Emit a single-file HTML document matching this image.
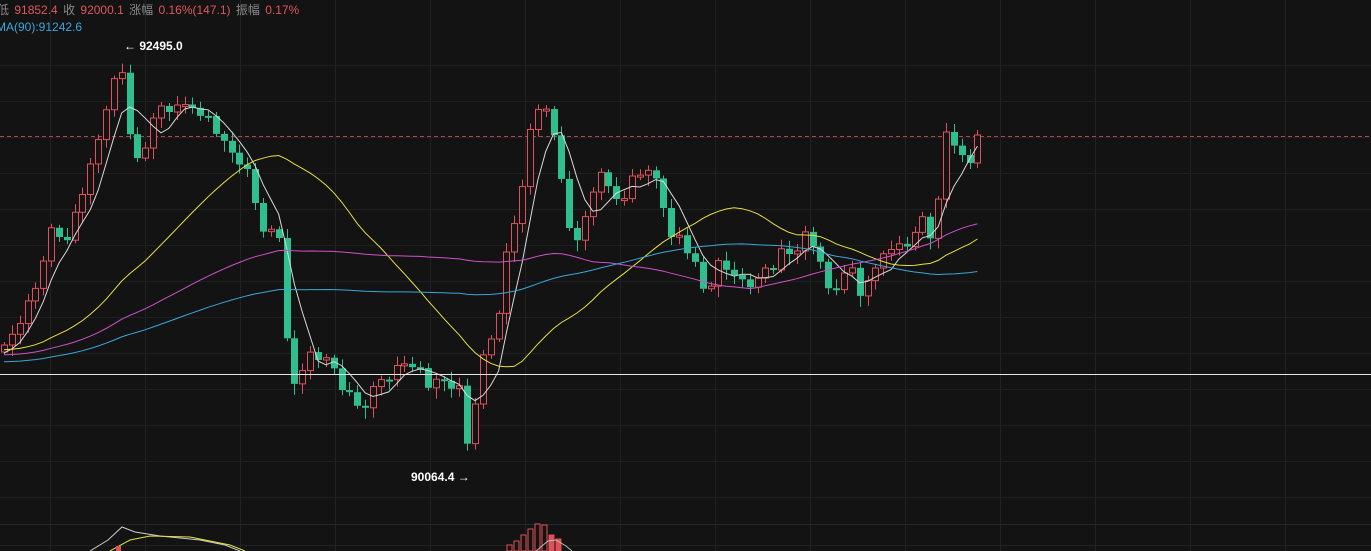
<!DOCTYPE html>
<html><head><meta charset="utf-8"><style>
html,body{margin:0;padding:0;background:#131314;width:1371px;height:551px;overflow:hidden;font-family:"Liberation Sans","Noto Sans CJK SC",sans-serif}
#t1{position:absolute;left:-3px;top:1px;font-size:12px;color:#8a8a8a;white-space:nowrap;word-spacing:2px}
#t1 b{font-weight:normal;color:#e0555a}
#t2{position:absolute;left:-4px;top:20px;font-size:12px;color:#3aa6d8}
.lb{position:absolute;font-size:12px;color:#fff;font-weight:bold;white-space:nowrap}
svg{position:absolute;left:0;top:0}
</style></head><body>
<svg id="s" width="1371" height="551"></svg>
<div id="t1">低 <b>91852.4</b> 收 <b>92000.1</b> 涨幅 <b>0.16%(147.1)</b> 振幅 <b>0.17%</b></div>
<div id="t2">MA(90):91242.6</div>
<div class="lb" style="left:124px;top:39px">← 92495.0</div>
<div class="lb" style="left:411px;top:470px">90064.4 →</div>
<script>
var s=document.getElementById('s'),h='';
function L(x1,y1,x2,y2,c,w,d){h+='<line x1="'+x1+'" y1="'+y1+'" x2="'+x2+'" y2="'+y2+'" stroke="'+c+'" stroke-width="'+(w||1)+'"'+(d?' stroke-dasharray="'+d+'"':'')+'/>';}
for(var x=50;x<1371;x+=95)L(x+.5,0,x+.5,551,'#202123');
for(var y=65;y<520;y+=36)L(0,y+.5,1371,y+.5,'#1e1f21');
L(0,524.5,1371,524.5,'#26272a');L(0,545.5,1371,545.5,'#202123');
var p=[[4,350],[20,320],[35,290],[50,230],[65,240],[80,200],[95,155],[105,110],[118,70],[125,75],[130,135],[140,170],[155,105],[165,110],[180,110],[190,100],[200,120],[210,115],[220,140],[230,150],[240,160],[250,175],[258,215],[265,245],[275,220],[280,240],[290,395],[300,370],[310,355],[320,360],[328,350],[335,375],[345,395],[355,400],[360,415],[370,395],[380,380],[390,375],[400,365],[410,360],[420,370],[430,390],[440,380],[450,385],[460,390],[468,450],[475,400],[482,360],[490,340],[497,320],[505,260],[512,230],[520,200],[525,180],[532,110],[540,105],[547,115],[555,140],[565,195],[572,255],[580,230],[588,200],[596,190],[603,160],[610,200],[618,200],[625,195],[632,180],[640,175],[647,165],[660,190],[668,230],[676,235],[683,240],[690,260],[697,270],[707,305],[715,255],[722,275],[730,265],[740,280],[748,290],[755,275],[762,270],[770,270],[778,265],[785,240],[793,270],[800,230],[808,240],[815,250],[822,260],[830,300],[838,285],[845,265],[852,270],[860,295],[868,285],[875,270],[882,250],[890,255],[897,245],[905,240],[912,250],[920,205],[928,240],[935,220],[940,190],[946,130],[953,150],[960,155],[968,160],[975,160],[983,135]];
function val(x){for(var i=0;i<p.length-1;i++)if(x<=p[i+1][0]){var a=p[i],b=p[i+1];return a[1]+(b[1]-a[1])*(x-a[0])/(b[0]-a[0]);}return p[p.length-1][1];}
var C=[],n=0;for(var x=4;x<=984;x+=7.85){C.push([x,val(x)+((n*37)%11-5)]);n++;}
C[C.length-1][1]=135;
var prev=352,sh='';
C.forEach(function(c,i){var o=prev,cl=c[1],up=cl<o;var t=Math.min(o,cl),b=Math.max(o,cl);if(b-t<2)b=t+2;
var hw=3+((i*13)%7),lw=3+((i*17)%9);var col=up?'#e0505a':'#2fbf8e';var cx=Math.round(c[0])+.5;
sh+='<line x1="'+cx+'" y1="'+(t-hw)+'" x2="'+cx+'" y2="'+(b+lw)+'" stroke="'+col+'"/>';
if(up)sh+='<rect x="'+(cx-3)+'" y="'+t+'" width="6" height="'+(b-t)+'" fill="#131314" stroke="'+col+'"/>';
else sh+='<rect x="'+(cx-3.5)+'" y="'+t+'" width="7" height="'+(b-t)+'" fill="'+col+'"/>';
prev=cl;});
function ma(N,pad,col){var pts=[];for(var i=0;i<C.length;i++){var sum=0;for(var k=i-N+1;k<=i;k++)sum+=k<0?pad:C[k][1];pts.push(C[i][0].toFixed(1)+','+(sum/N).toFixed(1));}
h+='<polyline points="'+pts.join(' ')+'" fill="none" stroke="'+col+'" stroke-width="1"/>';}
L(0,136.5,1371,136.5,'#b0454a',1,'4 3');
h+=sh;
ma(5,355,'#d8d8d8');ma(30,350,'#e8e040');ma(60,355,'#d050c8');ma(90,362,'#3aa6d8');
L(0,374.5,1371,374.5,'#e8e8e8');
var bx=[507,514,521,528,535,542,549,556];var bh=[6,10,16,22,27,26,16,12];
bx.forEach(function(x,i){h+='<rect x="'+x+'" y="'+(551-bh[i]*1.0)+'" width="5" height="'+bh[i]+'" fill="'+(i>5?'#e0505a':'#131314')+'" stroke="#e0505a"/>';});
h+='<polyline points="536,551 548,541 556,540 566,546 572,551" fill="none" stroke="#bbb"/>';
h+='<polyline points="90,551 108,540 122,527 135,532 160,536 200,540 225,545 240,551" fill="none" stroke="#ccc"/>';
h+='<polyline points="110,551 130,540 150,536 190,537 230,545 245,551" fill="none" stroke="#e8e040"/>';
h+='<rect x="116" y="546" width="5" height="5" fill="#e0505a"/>';
s.innerHTML=h;
</script>
</body></html>
